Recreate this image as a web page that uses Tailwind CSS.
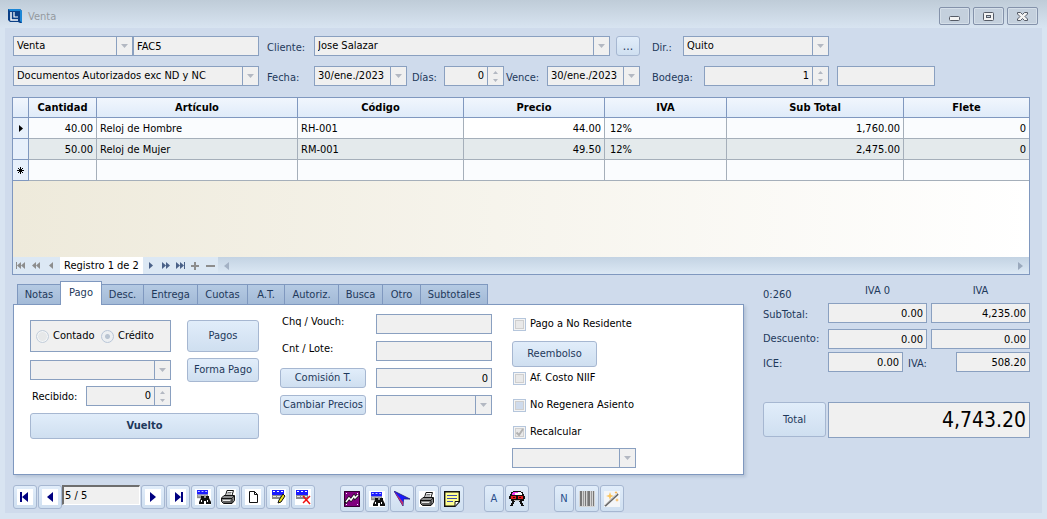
<!DOCTYPE html>
<html lang="es">
<head>
<meta charset="utf-8">
<title>Venta</title>
<script src="https://cdn.jsdelivr.net/npm/@tailwindcss/browser@4"></script>
</head>
<body class="flex min-h-screen flex-col bg-[#d8e4f1] font-['DejaVu_Sans_Condensed','DejaVu_Sans',sans-serif] text-[11px] leading-4 text-black">

<svg class="hidden" aria-hidden="true">
  <symbol id="down" viewBox="0 0 7 4"><path d="M0 0h7L3.5 4z" fill="#b3b8c2"/></symbol>
  <symbol id="spin" viewBox="0 0 5 11"><path d="M0 3L2.5 0 5 3zM0 8h5L2.500 11z" fill="#b3b8c2"/></symbol>
  <symbol id="grid" viewBox="0 0 12 11"><path d="M0 0h12v5H0z" fill="#1a1aff"/><path d="M1 1h2v1H1zM5 1h2v1H5zM9 1h2v1H9z" fill="#fff"/><path d="M0 5h12v4H0z" fill="#8a8a8a"/><path d="M1 6h3v1H1zM5 6h3v1H5zM9 6h2v1H9z" fill="#e8e8e8"/></symbol>
  <symbol id="find" viewBox="0 0 16 16"><rect width="16" height="16" fill="#fff"/><use href="#grid" x="2" y="1" width="11" height="10"/><path d="M6 7h3v2h2V7h3v2l2 4v2h-5v-3H9v3H4v-2l2-4z" fill="#111"/><path d="M6 11h1v2H6zM12 11h1v2h-1z" fill="#fff"/></symbol>
  <symbol id="print" viewBox="0 0 16 16"><rect width="16" height="16" fill="#fff"/><path d="M5.500 6.500L7 1.500h6.500L12 6.500z" fill="#fff" stroke="#111"/><path d="M7.500 3.500h4M7 5h4" stroke="#777"/><path d="M1.500 9L4 6.500h10.500v5L12 14.500H3.500l-2-2z" fill="#8c8c8c" stroke="#111"/><path d="M2 9.500h10l2-2.500M12 10v4" stroke="#111" fill="none"/><path d="M3 11.500h7" stroke="#e8e8e8"/><path d="M3 13h8" stroke="#333"/></symbol>
</svg>

<header class="flex h-7 items-center bg-gradient-to-b from-[#bfccd8] to-[#d8e4f1] pt-1 pr-[9px] pl-2">
  <svg class="size-[14px]" viewBox="0 0 14 14"><path d="M0 0h12l2 2v12h-2L10 13H2L0 11z" fill="#0b3f86"/><path d="M0 0h12l2 2v12l-2-2V2H2z" fill="#1b86d6"/><path d="M3 3v8h7" fill="none" stroke="#fff" stroke-width="1.500"/><path d="M6 3v5h4" fill="none" stroke="#fff" stroke-width="1.200"/></svg>
  <h1 class="ml-[6px] flex-1 pt-px text-[11px] text-[#94999f]">Venta</h1>
  <div class="flex gap-[3px]">
    <button aria-label="Minimizar" class="flex h-[18px] w-[31px] items-center justify-center rounded-[2px] border border-[#8492aa] bg-[#c4d0dd] shadow-[inset_0_0_0_1px_#d5dfe9]"><svg class="h-[11px] w-[13px]" viewBox="0 0 13 11"><rect x="1.500" y="5.500" width="10" height="4" rx="1" fill="#f3f3f3" stroke="#555b66"/></svg></button>
    <button aria-label="Maximizar" class="flex h-[18px] w-[31px] items-center justify-center rounded-[2px] border border-[#8492aa] bg-[#c4d0dd] shadow-[inset_0_0_0_1px_#d5dfe9]"><svg class="h-[9px] w-[11px]" viewBox="0 0 11 9"><rect x=".5" y=".5" width="10" height="8" rx="1" fill="#f3f3f3" stroke="#555b66"/><rect x="3.500" y="3.500" width="4" height="2" fill="#c4d0dd" stroke="#555b66"/></svg></button>
    <button aria-label="Cerrar" class="flex h-[18px] w-[31px] items-center justify-center rounded-[2px] border border-[#8492aa] bg-[#c4d0dd] shadow-[inset_0_0_0_1px_#d5dfe9]"><svg class="h-[9px] w-[11px]" viewBox="0 0 11 9"><path d="M.5.500h3l2 2 2-2h3v1.500L8 4.500 10.500 7v1.500h-3l-2-2-2 2h-3V7L3 4.500.5 2z" fill="#f3f3f3" stroke="#555b66"/></svg></button>
  </div>
</header>

<main class="mx-[5px] mb-[6px] flex-1 bg-[#cfdbec] pt-2 pr-[12px] pl-[7px] text-[#1e395b]">

  <div class="flex gap-2 pl-px">
    <section class="flex w-[246px] flex-col gap-[10px] text-black">
      <div class="flex">
        <div class="flex h-5 w-[120px] border border-[#8aa0c0] bg-[#f0f0f0]"><select aria-label="Tipo" class="min-w-0 flex-1 appearance-none px-[3px]"><option>Venta</option></select><span class="flex w-4 items-center justify-center border-l border-[#8aa0c0]"><svg class="h-1 w-[7px]"><use href="#down"/></svg></span></div>
        <input aria-label="Serie" value="FAC5" class="h-5 min-w-0 flex-1 border border-[#8aa0c0] bg-[#f0f0f0] px-[3px]">
      </div>
      <div class="flex h-5 border border-[#8aa0c0] bg-[#f0f0f0]"><select aria-label="Documentos" class="min-w-0 flex-1 appearance-none px-[3px]"><option>Documentos Autorizados exc ND y NC</option></select><span class="flex w-4 items-center justify-center border-l border-[#8aa0c0]"><svg class="h-1 w-[7px]"><use href="#down"/></svg></span></div>
    </section>

    <section class="flex min-w-0 flex-1 flex-col gap-[10px]">
      <div class="flex items-center">
        <label for="cliente" class="w-[47px] pt-[3px]">Cliente:</label>
        <div class="flex h-5 flex-1 border border-[#8aa0c0] bg-[#f0f0f0] text-black"><select id="cliente" class="min-w-0 flex-1 appearance-none px-[3px]"><option>Jose Salazar</option></select><span class="flex w-4 items-center justify-center border-l border-[#8aa0c0]"><svg class="h-1 w-[7px]"><use href="#down"/></svg></span></div>
        <button class="ml-[6px] h-5 w-6 rounded-[3px] border border-[#a6b7d1] bg-gradient-to-b from-[#e1edfa] to-[#cfdff0] text-xs leading-4" aria-label="Buscar cliente">...</button>
      </div>
      <div class="flex items-center">
        <label for="fecha" class="w-[47px] pt-[3px]">Fecha:</label>
        <div class="flex h-5 w-[93px] border border-[#8aa0c0] bg-[#f0f0f0] text-black"><input id="fecha" value="30/ene./2023" class="min-w-0 flex-1 pl-[3px]"><span class="flex w-4 items-center justify-center border-l border-[#8aa0c0]"><svg class="h-1 w-[7px]"><use href="#down"/></svg></span></div>
        <label for="dias" class="w-9 pt-[3px] pl-[5px]">Días:</label>
        <div class="ml-px flex h-5 min-w-0 flex-1 border border-[#8aa0c0] bg-[#f0f0f0] text-black"><input id="dias" value="0" class="min-w-0 flex-1 px-[3px] text-right"><span class="flex w-4 items-center justify-center border-l border-[#8aa0c0]"><svg class="h-[11px] w-[5px]"><use href="#spin"/></svg></span></div>
        <label for="vence" class="w-[43px] pt-[3px] pl-[2px]">Vence:</label>
        <div class="flex h-5 w-[93px] border border-[#8aa0c0] bg-[#f0f0f0] text-black"><input id="vence" value="30/ene./2023" class="min-w-0 flex-1 pl-[3px]"><span class="flex w-4 items-center justify-center border-l border-[#8aa0c0]"><svg class="h-1 w-[7px]"><use href="#down"/></svg></span></div>
      </div>
    </section>

    <section class="flex w-[382px] flex-col gap-[10px] pl-1">
      <div class="flex items-center">
        <label for="dir" class="w-[31px] pt-[3px]">Dir.:</label>
        <div class="flex h-5 w-[146px] border border-[#8aa0c0] bg-[#f0f0f0] text-black"><select id="dir" class="min-w-0 flex-1 appearance-none px-[3px]"><option>Quito</option></select><span class="flex w-4 items-center justify-center border-l border-[#8aa0c0]"><svg class="h-1 w-[7px]"><use href="#down"/></svg></span></div>
      </div>
      <div class="flex items-center">
        <label for="bodega" class="w-[52px] pt-[3px]">Bodega:</label>
        <div class="flex h-5 w-[125px] border border-[#8aa0c0] bg-[#f0f0f0] text-black"><input id="bodega" value="1" class="min-w-0 flex-1 px-[3px] text-right"><span class="flex w-4 items-center justify-center border-l border-[#8aa0c0]"><svg class="h-[11px] w-[5px]"><use href="#spin"/></svg></span></div>
        <input aria-label="Nombre de bodega" class="ml-2 h-5 w-[98px] border border-[#8aa0c0] bg-[#f0f0f0] px-[3px] text-black">
      </div>
    </section>
  </div>

  <section class="mt-[11px] border border-[#8098bf] text-black">
    <table class="w-full table-fixed border-separate border-spacing-0">
      <colgroup><col class="w-4"><col class="w-[68px]"><col class="w-[201px]"><col class="w-[166px]"><col class="w-[141px]"><col class="w-[122px]"><col class="w-[177px]"><col></colgroup>
      <thead class="[&_th]:h-5 [&_th]:border-r [&_th]:border-b [&_th]:border-[#8098bf] [&_th]:bg-gradient-to-b [&_th]:from-[#f1f6fd] [&_th]:to-[#dfebf9] [&_th]:p-0 [&_th:last-child]:border-r-0">
        <tr><th aria-label="Fila"></th><th>Cantidad</th><th>Artículo</th><th>Código</th><th>Precio</th><th>IVA</th><th>Sub Total</th><th>Flete</th></tr>
      </thead>
      <tbody class="[&_td]:h-[21px] [&_td]:border-r [&_td]:border-b [&_td]:border-[#a5afba] [&_td]:px-[3px] [&_td]:pt-px [&_td]:pb-0 [&_td:first-child]:border-[#8098bf] [&_td:first-child]:bg-[#e7f0fb] [&_td:last-child]:border-r-0">
        <tr class="bg-[#fafcfe]"><td><svg class="mx-auto h-[7px] w-1" viewBox="0 0 4 7"><path d="M0 0l4 3.500L0 7z"/></svg></td><td class="text-right">40.00</td><td>Reloj de Hombre</td><td>RH-001</td><td class="bg-white text-right">44.00</td><td class="pl-[5px]!">12%</td><td class="text-right">1,760.00</td><td class="text-right">0</td></tr>
        <tr class="bg-[#e4eaec]"><td></td><td class="text-right">50.00</td><td>Reloj de Mujer</td><td>RM-001</td><td class="text-right">49.50</td><td class="pl-[5px]!">12%</td><td class="text-right">2,475.00</td><td class="text-right">0</td></tr>
        <tr class="bg-[#fafcfe]"><td><svg class="mx-auto size-[7px]" viewBox="0 0 7 7"><path d="M3.500 0v7M0 3.500h7M1 1l5 5M6 1L1 6" stroke="#000"/></svg></td><td></td><td></td><td></td><td></td><td></td><td></td><td></td></tr>
      </tbody>
    </table>
    <div class="h-[76px] bg-gradient-to-r from-[#eeeadb] to-white"></div>
    <div class="flex h-[17px] items-center bg-[#dce8f4]">
      <div class="flex h-full items-center text-[#8d8d8d]">
        <button aria-label="Primero" class="w-4 pl-[3px]"><svg class="h-[7px] w-[9px]" viewBox="0 0 9 7" fill="currentColor"><path d="M0 0h1v7H0zM5 0v7L1 3.500zM9 0v7L5 3.500z"/></svg></button>
        <button aria-label="Página anterior" class="w-4 pl-[3px]"><svg class="h-[7px] w-[8px]" viewBox="0 0 8 7" fill="currentColor"><path d="M4 0v7L0 3.500zM8 0v7L4 3.500z"/></svg></button>
        <button aria-label="Anterior" class="w-[15px] pl-1"><svg class="h-[7px] w-1" viewBox="0 0 4 7" fill="currentColor"><path d="M4 0v7L0 3.500z"/></svg></button>
        <span class="h-full w-[83px] bg-white pt-px text-center text-black">Registro 1 de 2</span>
      </div>
      <div class="flex h-full w-[75px] items-center pl-[6px] text-[#4a6188]">
        <button aria-label="Siguiente" class="w-[13px]"><svg class="h-[7px] w-1" viewBox="0 0 4 7" fill="currentColor"><path d="M0 0v7l4-3.500z"/></svg></button>
        <button aria-label="Página siguiente" class="w-[14px]"><svg class="h-[7px] w-[8px]" viewBox="0 0 8 7" fill="currentColor"><path d="M0 0v7l4-3.500zM4 0v7l4-3.500z"/></svg></button>
        <button aria-label="Último" class="w-[15px]"><svg class="h-[7px] w-[9px]" viewBox="0 0 9 7" fill="currentColor"><path d="M8 0h1v7H8zM0 0v7l4-3.500zM4 0v7l4-3.500z"/></svg></button>
        <button aria-label="Agregar" class="w-[15px] text-[#8d8d8d]"><svg class="size-2" viewBox="0 0 8 8" fill="currentColor"><path d="M3 0h2v3h3v2H5v3H3V5H0V3h3z"/></svg></button>
        <button aria-label="Quitar" class="w-[10px] text-[#8d8d8d]"><svg class="h-2 w-[9px]" viewBox="0 0 9 8" fill="currentColor"><path d="M0 3h9v2H0z"/></svg></button>
      </div>
      <div class="flex h-full flex-1 items-center justify-between bg-gradient-to-b from-[#c3d3e3] to-[#dce8f4] px-[6px]">
        <svg class="h-2 w-[5px]" viewBox="0 0 5 8"><path d="M5 0v8L0 4z" fill="#a3b1c4"/></svg>
        <svg class="h-2 w-[5px]" viewBox="0 0 5 8"><path d="M0 0v8l5-4z" fill="#9aa9bd"/></svg>
      </div>
    </div>
  </section>

  <div class="flex pl-px">
    <section class="min-w-0 flex-1">
      <div role="tablist" class="flex h-[29px] items-end pl-1 [&>button]:h-5 [&>button]:border [&>button]:border-b-0 [&>button]:border-[#7f98bf] [&>button]:bg-gradient-to-b [&>button]:from-[#b5cae3] [&>button]:to-[#a3bad7] [&>button]:pt-px [&>button+button]:-ml-px [&>button]:whitespace-nowrap">
        <button role="tab" class="w-[44px]">Notas</button>
        <button role="tab" aria-selected="true" class="z-10 -mb-px h-6! w-[42px] bg-white bg-none! pb-[2px]">Pago</button>
        <button role="tab" class="w-[43px]">Desc.</button>
        <button role="tab" class="w-[55px]">Entrega</button>
        <button role="tab" class="w-[51px]">Cuotas</button>
        <button role="tab" class="w-[38px]">A.T.</button>
        <button role="tab" class="w-[55px]">Autoriz.</button>
        <button role="tab" class="w-[45px]">Busca</button>
        <button role="tab" class="w-[39px]">Otro</button>
        <button role="tab" class="w-[68px]">Subtotales</button>
      </div>
      <div role="tabpanel" class="flex h-[171px] border border-[#7f98bf] bg-white pt-[9px] pl-4 shadow-[2px_2px_3px_#b4c2d6]">
        <div class="w-[229px] pt-[6px]">
          <div class="flex justify-between">
            <fieldset class="flex h-8 w-[141px] items-center gap-1 border border-[#8aa0c0] bg-[#f0f0f0] pl-[5px] text-black">
              <input type="radio" id="contado" name="forma" class="size-[13px] appearance-none rounded-full border border-[#c3cedb] bg-[#e6e8e9] shadow-[inset_0_0_0_1px_#f4f6f8]"><label for="contado" class="w-[44px]">Contado</label>
              <input type="radio" id="credito" name="forma" checked class="size-[13px] appearance-none rounded-full border border-[#b9c6d8] bg-[radial-gradient(circle,#b9c4d2_0_2px,#eceff2_3px)]"><label for="credito">Crédito</label>
            </fieldset>
            <button class="h-8 w-[72px] rounded-[3px] border border-[#a6b7d1] bg-gradient-to-b from-[#e1edfa] to-[#cfdff0]">Pagos</button>
          </div>
          <div class="mt-[6px] flex items-center justify-between">
            <div class="flex h-5 w-[141px] border border-[#8aa0c0] bg-[#f0f0f0]"><select aria-label="Forma de pago" class="min-w-0 flex-1 appearance-none px-[3px]"></select><span class="flex w-4 items-center justify-center border-l border-[#8aa0c0]"><svg class="h-1 w-[7px]"><use href="#down"/></svg></span></div>
            <button class="h-6 w-[72px] rounded-[3px] border border-[#a6b7d1] bg-gradient-to-b from-[#e1edfa] to-[#cfdff0] whitespace-nowrap">Forma Pago</button>
          </div>
          <div class="mt-1 flex items-center text-black">
            <label for="recibido" class="w-14 pt-[2px] pl-[2px]">Recibido:</label>
            <div class="flex h-5 w-[85px] border border-[#8aa0c0] bg-[#f0f0f0]"><input id="recibido" value="0" class="min-w-0 flex-1 px-[3px] text-right"><span class="flex w-4 items-center justify-center border-l border-[#8aa0c0]"><svg class="h-[11px] w-[5px]"><use href="#spin"/></svg></span></div>
          </div>
          <button class="mt-[7px] h-[26px] w-full rounded-[3px] border border-[#a6b7d1] bg-gradient-to-b from-[#e1edfa] to-[#cfdff0] text-[11px] font-bold">Vuelto</button>
        </div>

        <div class="ml-[21px] grid w-[212px] grid-cols-[86px_116px] content-start items-center gap-x-[10px] gap-y-[7px]">
          <label for="chq" class="pb-1 pl-[2px] text-black">Chq / Vouch:</label><input id="chq" class="h-5 border border-[#8aa0c0] bg-[#f0f0f0]">
          <label for="lote" class="pb-1 pl-[2px] text-black">Cnt / Lote:</label><input id="lote" class="h-5 border border-[#8aa0c0] bg-[#f0f0f0]">
          <button class="h-5 rounded-[3px] border border-[#a6b7d1] bg-gradient-to-b from-[#e1edfa] to-[#cfdff0]">Comisión T.</button><input aria-label="Comisión" value="0" class="h-5 border border-[#8aa0c0] bg-[#f0f0f0] px-[3px] text-right text-black">
          <button class="h-5 rounded-[3px] border border-[#a6b7d1] bg-gradient-to-b from-[#e1edfa] to-[#cfdff0] whitespace-nowrap">Cambiar Precios</button>
          <div class="flex h-5 border border-[#8aa0c0] bg-[#f0f0f0]"><select aria-label="Lista de precios" class="min-w-0 flex-1 appearance-none px-[3px]"></select><span class="flex w-4 items-center justify-center border-l border-[#8aa0c0]"><svg class="h-1 w-[7px]"><use href="#down"/></svg></span></div>
        </div>

        <div class="ml-5 flex flex-col items-start gap-[7px] [&>label]:flex [&>label]:h-5 [&>label]:items-center [&>label]:gap-1 [&>label]:pl-px [&>label]:text-black">
          <label><input type="checkbox" class="size-[13px] appearance-none border border-[#b5c6dc] bg-[#e9e9e9] shadow-[inset_0_0_0_1px_#f4f4f4,inset_0_0_0_2px_#cfcfcf]">Pago a No Residente</label>
          <button class="-mb-[6px] h-[26px] w-[85px] rounded-[3px] border border-[#a6b7d1] bg-gradient-to-b from-[#e1edfa] to-[#cfdff0]">Reembolso</button>
          <label><input type="checkbox" class="size-[13px] appearance-none border border-[#b5c6dc] bg-[#e9e9e9] shadow-[inset_0_0_0_1px_#f4f4f4,inset_0_0_0_2px_#cfcfcf]">Af. Costo NIIF</label>
          <label><input type="checkbox" class="size-[13px] appearance-none border border-[#b5c6dc] bg-[#cfdbec] shadow-[inset_0_0_0_1px_#f4f4f4,inset_0_0_0_2px_#cfcfcf]">No Regenera Asiento</label>
          <label><span class="grid"><input type="checkbox" checked class="col-start-1 row-start-1 size-[13px] appearance-none border border-[#b5c6dc] bg-[#e9e9e9] shadow-[inset_0_0_0_1px_#f4f4f4,inset_0_0_0_2px_#cfcfcf]"><svg class="pointer-events-none col-start-1 row-start-1 size-[13px]" viewBox="0 0 13 13"><path d="M3.500 6.500L6 9l4-6" fill="none" stroke="#b2b2b2" stroke-width="2"/></svg></span>Recalcular</label>
          <div class="-mt-px flex h-5 w-[124px] border border-[#8aa0c0] bg-[#f0f0f0]"><select aria-label="Opciones" class="min-w-0 flex-1 appearance-none px-[3px]"></select><span class="flex w-4 items-center justify-center border-l border-[#8aa0c0]"><svg class="h-1 w-[7px]"><use href="#down"/></svg></span></div>
        </div>
      </div>
    </section>

    <section class="ml-[19px] w-[267px] pt-2">
      <div class="flex h-5"><span class="w-[65px] pt-1">0:260</span><span class="w-[99px] text-center">IVA 0</span><span class="ml-1 flex-1 text-center">IVA</span></div>
      <div class="flex items-center gap-1"><label for="sub0" class="w-[61px] pt-1">SubTotal:</label><input id="sub0" value="0.00" class="h-5 w-[99px] border border-[#8aa0c0] bg-[#f0f0f0] px-[3px] text-right text-black"><input aria-label="SubTotal IVA" value="4,235.00" class="h-5 w-[99px] border border-[#8aa0c0] bg-[#f0f0f0] px-[3px] text-right text-black"></div>
      <div class="mt-[6px] flex items-center gap-1"><label for="des0" class="w-[61px]">Descuento:</label><input id="des0" value="0.00" class="h-5 w-[99px] border border-[#8aa0c0] bg-[#f0f0f0] px-[3px] text-right text-black"><input aria-label="Descuento IVA" value="0.00" class="h-5 w-[99px] border border-[#8aa0c0] bg-[#f0f0f0] px-[3px] text-right text-black"></div>
      <div class="mt-[3px] flex items-center"><label for="ice" class="w-[65px] pt-1">ICE:</label><input id="ice" value="0.00" class="h-5 w-[75px] border border-[#8aa0c0] bg-[#f0f0f0] px-[3px] text-right text-black"><label for="iva" class="w-[53px] pt-1 pl-[5px]">IVA:</label><input id="iva" value="508.20" class="h-5 w-[74px] border border-[#8aa0c0] bg-[#f0f0f0] px-[3px] text-right text-black"></div>
      <div class="mt-[30px] flex items-start gap-[2px]"><button class="h-[35px] w-[63px] rounded-[3px] border border-[#a6b7d1] bg-gradient-to-b from-[#e1edfa] to-[#cfdff0]">Total</button><input aria-label="Total" value="4,743.20" class="h-9 min-w-0 flex-1 border border-[#8aa0c0] bg-[#f0f0f0] px-[3px] text-right text-[21px] text-black"></div>
    </section>
  </div>

  <footer class="mt-[10px] flex items-start pl-px [&_button]:flex [&_button]:items-center [&_button]:justify-center [&_button]:rounded-[3px] [&_button]:border [&_button]:border-[#a6b7d1] [&_button]:bg-gradient-to-b [&_button]:from-[#e1edfa] [&_button]:to-[#cfdff0]">
    <div class="flex gap-px [&>button]:h-6 [&>button]:w-6 [&_svg]:size-4">
      <button aria-label="Primer registro"><svg viewBox="0 0 16 16"><path fill="#fff" d="M0 0h16v16H0z"/><path d="M3 3h2v10H3zM11 3v10L5 8z" fill="#000080"/></svg></button>
      <button aria-label="Registro anterior"><svg viewBox="0 0 16 16"><path fill="#fff" d="M0 0h16v16H0z"/><path d="M11 3v10L5 8z" fill="#000080"/></svg></button>
      <input aria-label="Posición" value="5 / 5" class="-ml-px h-5 w-[78px] border-t-2 border-r border-b border-l-2 border-t-[#6e6e6e] border-r-white border-b-white border-l-[#6e6e6e] bg-[#f0f0f0] px-px text-[11px] text-black">
      <button aria-label="Registro siguiente"><svg viewBox="0 0 16 16"><path fill="#fff" d="M0 0h16v16H0z"/><path d="M5 3v10l6-5z" fill="#000080"/></svg></button>
      <button aria-label="Último registro"><svg viewBox="0 0 16 16"><path fill="#fff" d="M0 0h16v16H0z"/><path d="M11 3h2v10h-2zM5 3v10l6-5z" fill="#000080"/></svg></button>
      <button aria-label="Buscar"><svg><use href="#find"/></svg></button>
      <button aria-label="Imprimir"><svg><use href="#print"/></svg></button>
      <button aria-label="Nuevo"><svg viewBox="0 0 16 16"><path fill="#fff" d="M0 0h16v16H0z"/><path d="M4.500 2.500h5l3 3v8h-8zM9.500 2.500v3h3" fill="#fff" stroke="#111"/></svg></button>
      <button aria-label="Editar"><svg viewBox="0 0 16 16"><path fill="#fff" d="M0 0h16v16H0z"/><use href="#grid" x="2" y="1" width="12" height="11"/><path d="M13 5l2 2-4 6-3 1 1-3z" fill="#e8e020" stroke="#111"/></svg></button>
      <button aria-label="Eliminar"><svg viewBox="0 0 16 16"><path fill="#fff" d="M0 0h16v16H0z"/><use href="#grid" x="1" y="1" width="12" height="11"/><path d="M8 7l7 8M15 7l-7 7" stroke="#f01010" stroke-width="1.500"/></svg></button>
    </div>
    <div class="ml-[25px] flex gap-px [&>button]:h-[27px] [&>button]:w-6 [&_svg]:size-4">
      <button aria-label="Gráfico"><svg viewBox="0 0 16 16"><path fill="#800080" d="M0 0h16v16H0z"/><path d="M.5.5h15v15H.5z" fill="none" stroke="#300030"/><path d="M1 12l4-5 2 2 3-4 1 2 3-3" fill="none" stroke="#111" stroke-width="3"/><path d="M2 11l3-4 2 2 3-4 1 2 3-3" fill="none" stroke="#fff" stroke-width="1.500"/><path d="M2 2h1v1H2zM13 2h1v1h-1zM2 13h1v1H2zM13 13h1v1h-1z" fill="#fff"/></svg></button>
      <button aria-label="Buscar documento"><svg><use href="#find"/></svg></button>
      <button aria-label="Seleccionar"><svg viewBox="0 0 16 16"><path d="M0 0l16 8H9.500L9 15z" fill="#1a1aff" stroke="#202070" stroke-width=".8"/><path d="M0 0l9 15V9.500z" fill="#c03070"/><path d="M0 0l9.500 8-.5 3z" fill="#1a1aff"/></svg></button>
      <button aria-label="Imprimir documento"><svg><use href="#print"/></svg></button>
      <button aria-label="Notas"><svg viewBox="0 0 16 16"><path d="M.7.700h14.600v10L11 15.300H.7z" fill="#ffff90" stroke="#111" stroke-width="1.400"/><path d="M3 4.500h10M3 7.500h10M3 10.500h6" stroke="#3a4ab0"/><path d="M15 10.500h-4V15" fill="#fff" stroke="#111"/></svg></button>
    </div>
    <div class="ml-5 flex gap-px [&>button]:h-[27px]">
      <button class="w-5 text-[#2a4f8c]">A</button>
      <button aria-label="Incógnito" class="w-6"><svg class="size-4" viewBox="0 0 16 16" shape-rendering="crispEdges"><path d="M4 0h8v1h2v2h1v2h1v3h-1v2h-2v2h1v2h1v1h-3v-2h-1v-2h-1v-1H6v1H5v2H4v2H1v-1h1v-2h1v-2H2V8H0V5h1V3h1V1h2z" fill="#111"/><path d="M4 1h5v1H4zM3 2h3v2H3z" fill="#f040f0"/><path d="M9 1h3v1H9zM6 2h7v2H6z" fill="#fff"/><path d="M2 5h5v3H2zM9 5h5v3H9z" fill="#e02020"/><path d="M4 6h2v1H4zM10 6h2v1h-2z" fill="#500"/><path d="M5 9h6v1H5z" fill="#bbb"/></svg></button>
    </div>
    <div class="ml-[25px] flex gap-px [&>button]:h-[27px]">
      <button class="w-5 text-[#2a4f8c]">N</button>
      <button aria-label="Código de barras" class="w-6"><svg class="size-4" viewBox="0 0 16 16"><path fill="#d4d4d4" d="M0 0h16v16H0z"/><path d="M1 0h2v15H1zM6 0h1v15H6zM9 0h2v15H9zM14 0h1v15h-1z" fill="#777"/><path d="M4 0h1v15H4zM8 0h1v15H8zM12 0h1v15h-1z" fill="#999"/></svg></button>
      <button aria-label="Asistente" class="w-6"><svg class="size-4" viewBox="0 0 16 16"><path fill="#f4f6f8" d="M0 0h16v16H0z"/><path d="M1 15L14 3" stroke="#666" stroke-width="2"/><path d="M1 14L13 3" stroke="#ddd" stroke-width=".8"/><path d="M6 1l1 3 3 1-3 1-1 3-1-3-3-1 3-1z" fill="#fbc45a"/><path d="M13 7l.5 1.500L15 9l-1.500.5L13 11l-.5-1.500L11 9l1.500-.5zM12 0l.5 1 1 .5-1 .5-.5 1-.5-1-1-.5 1-.5z" fill="#fbb040"/></svg></button>
    </div>
  </footer>
</main>
</body>
</html>
